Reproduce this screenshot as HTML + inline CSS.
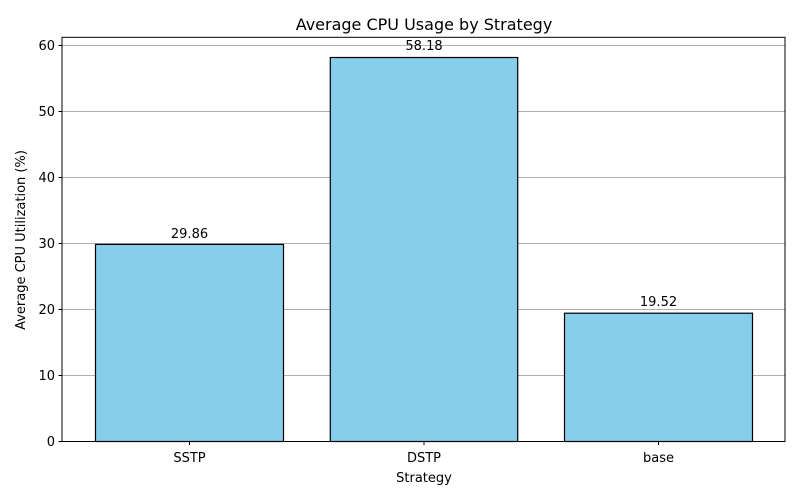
<!DOCTYPE html>
<html><head><meta charset="utf-8"><style>html,body{margin:0;padding:0;background:#fff}svg{display:block}text{font-family:"DejaVu Sans",sans-serif;fill:#000}</style></head><body>
<svg width="800" height="500" viewBox="0 0 800 500" xmlns="http://www.w3.org/2000/svg">
<rect width="800" height="500" fill="#fff"/>
<g stroke="#b0b0b0" stroke-width="1">
<line x1="62" x2="785" y1="45.5" y2="45.5"/>
<line x1="62" x2="785" y1="111.5" y2="111.5"/>
<line x1="62" x2="785" y1="177.5" y2="177.5"/>
<line x1="62" x2="785" y1="243.5" y2="243.5"/>
<line x1="62" x2="785" y1="309.5" y2="309.5"/>
<line x1="62" x2="785" y1="375.5" y2="375.5"/>
</g>
<g fill="#87ceeb" stroke="#000" stroke-width="1.2">
<rect x="95.5" y="244.4" width="188" height="197.1"/>
<rect x="330.3" y="57.5" width="187.4" height="384"/>
<rect x="564.5" y="313.2" width="188" height="128.3"/>
</g>
<rect x="62" y="37.3" width="723" height="404.2" fill="none" stroke="#000" stroke-width="1"/>
<g stroke="#000" stroke-width="1">
<line x1="58.5" x2="62" y1="441.5" y2="441.5"/>
<line x1="58.5" x2="62" y1="375.5" y2="375.5"/>
<line x1="58.5" x2="62" y1="309.5" y2="309.5"/>
<line x1="58.5" x2="62" y1="243.5" y2="243.5"/>
<line x1="58.5" x2="62" y1="177.5" y2="177.5"/>
<line x1="58.5" x2="62" y1="111.5" y2="111.5"/>
<line x1="58.5" x2="62" y1="45.5" y2="45.5"/>
<line x1="189.5" x2="189.5" y1="441.5" y2="445"/>
<line x1="424" x2="424" y1="441.5" y2="445"/>
<line x1="658.5" x2="658.5" y1="441.5" y2="445"/>
</g>
<g font-size="13" text-anchor="end">
<text x="55" y="446">0</text>
<text x="55" y="380">10</text>
<text x="55" y="314">20</text>
<text x="55" y="248">30</text>
<text x="55" y="182">40</text>
<text x="55" y="116">50</text>
<text x="55" y="50">60</text>
</g>
<g font-size="13" text-anchor="middle">
<text x="189.5" y="462">SSTP</text>
<text x="424" y="462">DSTP</text>
<text x="658.5" y="462">base</text>
<text x="189.5" y="238">29.86</text>
<text x="424" y="50">58.18</text>
<text x="658.5" y="306">19.52</text>
<text x="424" y="482">Strategy</text>
<text x="424" y="30" font-size="16">Average CPU Usage by Strategy</text>
<text transform="translate(25,240) rotate(-90)">Average CPU Utilization (%)</text>
</g>
</svg>
</body></html>
